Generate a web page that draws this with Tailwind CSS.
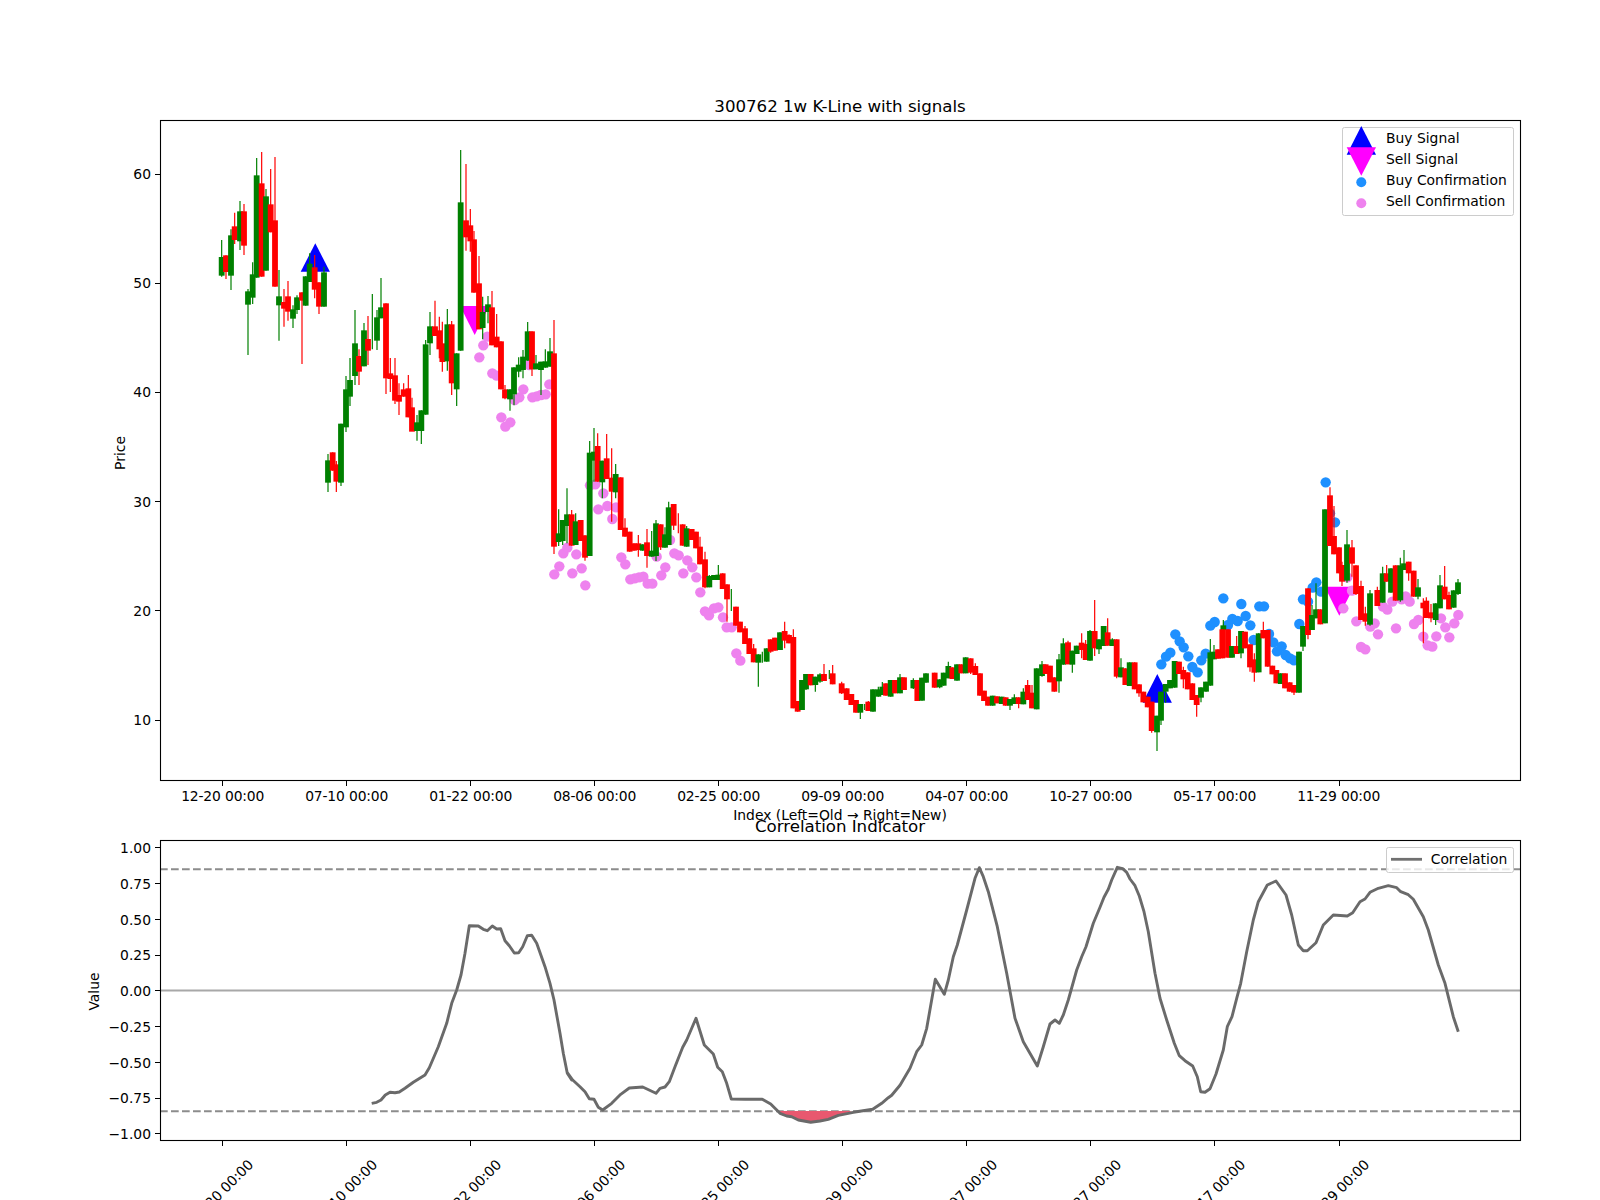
<!DOCTYPE html>
<html>
<head>
<meta charset="utf-8">
<script src="https://cdn.jsdelivr.net/npm/@tailwindcss/browser@4"></script>
</head>
<body class="bg-white">
<div class="w-[1600px] h-[1200px] overflow-hidden bg-white">
<svg id="c" width="1600" height="1200" viewBox="0 0 1600 1200" class="block font-['DejaVu_Sans'] text-[13.89px] fill-black">
  <text x="840" y="112" text-anchor="middle" class="text-[16.67px] tracking-[-0.03px]">300762 1w K-Line with signals</text>
  <g id="upper"></g>
  <rect x="160.5" y="120.5" width="1360" height="660" fill="none" stroke="#000" stroke-width="1.1"/>
  <g stroke="#000" stroke-width="1" shape-rendering="crispEdges">
    <path d="M155 174.5H160M155 283.5H160M155 392.5H160M155 501.5H160M155 610.5H160M155 720.5H160"/>
    <path d="M222.5 781v5M346.5 781v5M470.5 781v5M594.5 781v5M718.5 781v5M842.5 781v5M966.5 781v5M1090.5 781v5M1214.5 781v5M1339.5 781v5"/>
    <path d="M155 847.5H160M155 883.5H160M155 919.5H160M155 955.5H160M155 990.5H160M155 1026.5H160M155 1062.5H160M155 1098.5H160M155 1133.5H160"/>
    <path d="M222.5 1141v5M346.5 1141v5M470.5 1141v5M594.5 1141v5M718.5 1141v5M842.5 1141v5M966.5 1141v5M1090.5 1141v5M1214.5 1141v5M1339.5 1141v5"/>
  </g>
  <g text-anchor="end">
    <text x="151" y="179">60</text><text x="151" y="288.2">50</text><text x="151" y="397.4">40</text><text x="151" y="506.6">30</text><text x="151" y="615.8">20</text><text x="151" y="725">10</text>
    <text x="151" y="853">1.00</text><text x="151" y="888.5">0.75</text><text x="151" y="924.5">0.50</text><text x="151" y="960">0.25</text><text x="151" y="996">0.00</text><text x="151" y="1031.5">−0.25</text><text x="151" y="1067.5">−0.50</text><text x="151" y="1103">−0.75</text><text x="151" y="1139">−1.00</text>
  </g>
  <g text-anchor="middle">
    <g class="tracking-[-0.15px]">
    <text x="222.7" y="801">12-20 00:00</text><text x="346.7" y="801">07-10 00:00</text><text x="470.7" y="801">01-22 00:00</text><text x="594.7" y="801">08-06 00:00</text><text x="718.7" y="801">02-25 00:00</text><text x="842.7" y="801">09-09 00:00</text><text x="966.7" y="801">04-07 00:00</text><text x="1090.7" y="801">10-27 00:00</text><text x="1214.7" y="801">05-17 00:00</text><text x="1338.7" y="801">11-29 00:00</text>
    </g>
    <text x="840" y="820">Index (Left=Old → Right=New)</text>
    <text x="840" y="832" class="text-[16.67px] tracking-[-0.03px]">Correlation Indicator</text>
    <text transform="translate(124.5 453) rotate(-90)">Price</text>
    <text transform="translate(98.5 991.5) rotate(-90)">Value</text>
    <g class="tracking-[-0.15px]">
    <text transform="translate(224.7 1195) rotate(-45)">12-20 00:00</text>
    <text transform="translate(348.7 1195) rotate(-45)">07-10 00:00</text>
    <text transform="translate(472.7 1195) rotate(-45)">01-22 00:00</text>
    <text transform="translate(596.7 1195) rotate(-45)">08-06 00:00</text>
    <text transform="translate(720.7 1195) rotate(-45)">02-25 00:00</text>
    <text transform="translate(844.7 1195) rotate(-45)">09-09 00:00</text>
    <text transform="translate(968.7 1195) rotate(-45)">04-07 00:00</text>
    <text transform="translate(1092.7 1195) rotate(-45)">10-27 00:00</text>
    <text transform="translate(1216.7 1195) rotate(-45)">05-17 00:00</text>
    <text transform="translate(1340.7 1195) rotate(-45)">11-29 00:00</text>
    </g>
  </g>
  <!-- upper legend -->
  <rect x="1342.5" y="127.5" width="171" height="88" rx="2" fill="#fff" fill-opacity="0.8" stroke="#ccc"/>
  <path d="M1361.3 126L1376 154.7H1346.7Z" fill="#00f"/>
  <path d="M1346.7 147.3H1376L1361.3 175.7Z" fill="#f0f"/>
  <circle cx="1361.3" cy="182.3" r="5" fill="#1e90ff"/>
  <circle cx="1361.3" cy="203.3" r="5" fill="#ee82ee"/>
  <text x="1386" y="143">Buy Signal</text>
  <text x="1386" y="164">Sell Signal</text>
  <text x="1386" y="185">Buy Confirmation</text>
  <text x="1386" y="206">Sell Confirmation</text>
  <!-- lower plot -->
  <g id="lower"></g>
  <rect x="160.5" y="840.5" width="1360" height="300" fill="none" stroke="#000" stroke-width="1.1"/>
  <rect x="1386.5" y="847.5" width="127" height="25" rx="2" fill="#fff" fill-opacity="0.8" stroke="#ccc"/>
  <path d="M1391 859.3H1422" stroke="#707070" stroke-width="2.8"/>
  <text x="1430.7" y="864.3">Correlation</text>
</svg>
</div>
<script>
const NS='http://www.w3.org/2000/svg';
function el(parent,tag,attrs){const e=document.createElementNS(NS,tag);for(const k in attrs)e.setAttribute(k,attrs[k]);parent.appendChild(e);return e;}
const upper=document.getElementById('upper'),lower=document.getElementById('lower');
// marker triangles
[[315.3,243.3,271.7],[1157.3,674,702.7]].forEach(t=>el(upper,'path',{d:`M${t[0]} ${t[1]}L${t[0]+14.6} ${t[2]}H${t[0]-14.6}Z`,fill:'#00f'}));
[[474.7,306,335],[1339.3,586.7,615.7]].forEach(t=>el(upper,'path',{d:`M${t[0]-14.6} ${t[1]}H${t[0]+14.6}L${t[0]} ${t[2]}Z`,fill:'#f0f'}));
function dots(x0,y0,list,color){list.trim().split(/\s+/).forEach(p=>{const [a,b]=p.split(',').map(Number);el(upper,'circle',{cx:x0+a/3,cy:y0+b/3,r:5.2,fill:color});});}
dots(1030,550,`394,343 408,320 421,308 436,253 449,274 461,292 475,319 487,351 503,367 514,331 527,311 541,227 554,216 580,145 594,225 607,207 623,213 634,162 647,198 661,226 688,169 702,169 671,270 717,252 730,277 741,304 755,289 767,315 780,325 792,331 808,222 819,148 834,155 848,113 859,97 873,125`,'#1e90ff');
dots(1260,460,`197,67 210,160 225,187`,'#1e90ff');
dots(430,300,`148,172 160,136 172,110 187,220 200,227 214,352 241,367 226,380 280,268 268,292 254,300 307,292 320,289 333,285 347,283 358,253 298,195 373,823 388,799 427,820 400,760 412,743 439,763 455,805 466,856 480,556 496,553 520,580 505,628 532,618 558,622 547,657 574,772 586,793 601,838 614,835 627,832 640,830 653,851 667,851 680,770 706,802 694,826 720,720 733,760 746,766 772,781 787,802 799,832 760,820 811,877`,'#ee82ee');
dots(640,500,`195,334 207,346 222,325 235,322 249,352 260,382 275,382 289,460 301,482`,'#ee82ee');
dots(1260,460,`250,445 276,392 262,352 289,484 344,490 331,500 354,523 303,561 316,568 369,440 382,449 397,425 437,409 425,418 449,425 408,505 462,492 475,480 490,530 503,556 517,560 543,475 556,502 529,529 568,532 583,490 595,465`,'#ee82ee');
// candles: colour x bodyTop bodyBottom wickTop wickBottom, in crop coordinates (3x)
function candles(x0,y0,s){s.trim().split(/\s*;\s*/).filter(Boolean).forEach(r=>{const p=r.split(/\s+/),col=p[0]=='G'?'#008000':'#ff0000',[zx,bt,bb,wt,wb]=p.slice(1).map(Number),x=x0+zx/3;
 el(upper,'path',{d:`M${x} ${y0+wt/3}V${y0+wb/3}`,stroke:col,'stroke-width':1.2,fill:'none'});
 if(bb>bt)el(upper,'rect',{x:x-2.9,y:y0+bt/3,width:5.8,height:(bb-bt)/3,fill:col});});}
candles(150,110,`G 215 441 497 390 500;R 228 436 486 436 507;G 243 376 497 358 540;R 254 349 390 308 402;G 270 304 394 273 420;R 282 304 407 282 435;G 294 544 584 537 735;G 308 493 563 457 582;G 320 196 503 144 503;R 335 220 500 126 500;G 348 259 482 237 482;R 362 283 367 177 367;R 375 331 530 141 530;G 387 559 586 480 692;R 402 576 596 537 650;R 414 559 605 513 632;G 429 598 626 586 654;G 441 562 600 556 612;R 456 547 572 547 762;G 467 499 587 499 587;G 479 461 516 430 516;R 494 472 539 435 565;R 507 517 590 517 612;G 522 487 590 470 590`);
candles(315,300,`G 39 481 548 462 576;R 53 457 512 457 512;R 64 493 545 483 576;G 78 371 548 371 558;G 93 268 382 228 396;G 105 240 290 174 318;G 120 130 228 30 255;R 132 168 215 148 255;G 147 91 199 69 199;R 159 117 152 48 195;G 172 100 100 -18 148;G 186 52 122 30 150;G 198 22 55 -66 55;R 213 10 235 10 282;R 226 220 237 174 276;R 240 226 302 174 312;R 252 285 305 250 345;R 266 268 290 250 290;R 280 265 352 225 352;R 291 322 395 293 378;G 306 367 393 345 422;G 319 331 393 331 432;G 332 133 344 120 344;G 345 79 130 36 165;R 360 79 108 2 108;R 373 91 148 50 175;R 382 130 186 65 215;G 397 73 184 27 212;R 410 73 250 63 285;G 425 160 268 160 318`);
candles(150,110,`G 932 277 722 120 722;R 948 331 382 162 422;R 961 346 394 297 425;R 972 388 548 363 548;R 987 520 658 438 658`);
candles(430,300,`G 158 36 84 -10 118;G 174 13 36 -12 70;R 186 22 136 -27 136;R 200 110 142 42 142;R 213 124 268 124 268;R 225 268 295 255 298;G 240 268 298 268 332;G 252 202 283 202 316;G 266 194 215 172 232;G 279 170 210 150 235;G 293 94 182 66 182;R 306 94 208 94 228;G 318 190 208 165 208;G 333 185 210 185 285;G 346 184 203 148 203;G 360 154 200 114 200;R 372 160 740 60 762;G 386 700 726 628 738;G 398 660 723 660 735;G 411 643 678 565 730;R 425 643 737 630 737;G 437 664 735 640 735;R 452 660 723 660 723;R 465 706 773 706 782;G 479 458 768 423 768;G 492 455 482 384 545;R 503 438 545 400 545;G 517 482 547 482 595;R 530 475 537 402 537;R 545 533 575 445 665;G 557 522 577 492 595;R 572 532 690 532 690;R 585 683 710 655 710;R 599 695 755 695 755;R 612 730 752 730 752;R 625 730 750 705 770;G 638 733 752 733 752;R 651 727 768 687 803;G 665 752 770 693 770;G 678 670 768 660 783;R 692 673 742 673 750;G 705 703 743 682 743;G 716 622 735 605 735;R 731 612 677 612 690`);
candles(640,500,`R 115 60 60 40 100;R 128 73 137 73 137;G 140 85 140 78 140;R 155 87 120 87 120;R 168 95 145 95 145;R 180 140 193 110 193;R 195 178 262 155 265;G 208 228 262 225 262;G 222 225 240 225 240;G 235 224 240 195 240;R 248 220 267 220 267;R 261 253 298 253 365;G 274 300 300 267 333;R 288 320 377 320 377;R 300 365 397 365 397;R 315 385 432 378 432;R 328 415 462 415 462;R 341 445 487 432 487;G 355 463 488 463 560;G 367 470 470 455 488;G 380 445 485 445 485;R 392 418 455 418 458;R 405 413 452 413 452;G 420 397 450 397 450;R 434 393 422 365 445;R 447 405 430 403 430;R 460 411 625 388 625;R 473 603 635 603 635;G 486 540 630 540 630;G 498 522 568 522 570;R 512 522 556 522 556;G 526 530 555 530 575;G 540 523 545 520 548;R 552 522 543 492 543;G 568 525 525 510 537;R 578 520 553 495 553;R 605 550 580 545 582;R 620 565 600 565 600;R 634 582 615 582 615;R 648 600 638 600 638;G 661 612 638 612 657;G 674 620 620 612 630;R 685 605 633 603 633;G 699 568 635 568 635;G 715 568 590 560 590;G 727 560 585 546 585;R 738 550 587 550 587;G 752 540 590 540 590;R 765 540 580 540 580;G 780 532 580 522 580;R 792 532 570 532 570;G 820 540 565 535 567;R 832 540 603 540 603;G 846 533 602 533 602;G 858 520 548 520 548;R 884 518 563 518 563;G 899 538 562 538 565;G 911 518 557 518 557;G 925 498 535 485 535;R 937 502 537 502 537;G 951 493 542 493 542;R 964 493 520 493 520;G 977 472 520 472 520;R 992 475 518 475 522;R 1006 498 525 490 525;R 1020 520 587 520 587;R 1032 572 603 572 603;R 1044 590 617 590 617;G 1058 587 617 587 617;R 1071 589 610 589 610;G 1085 590 612 590 612;R 1097 592 617 592 617;G 1110 597 617 597 630;G 1123 592 612 583 612;R 1136 592 612 592 625;G 1150 575 613 565 613;R 1163 555 600 540 600`);
candles(1030,550,`R 6 428 475 405 475;G 20 355 478 355 478;G 36 343 378 333 380;R 47 343 372 343 372;R 60 347 397 347 397;R 73 382 425 382 425;G 87 328 394 312 428;G 100 280 344 265 344;R 114 277 343 272 343;G 127 302 344 302 368;G 140 287 312 287 312;R 155 278 300 250 325;R 167 282 330 270 330;G 180 243 332 240 332;R 194 243 295 150 318;G 207 268 298 268 312;G 221 228 288 228 288;R 233 247 287 205 287;G 247 268 288 265 288;R 260 268 380 268 385;G 273 352 382 325 382;R 286 355 405 355 405;G 299 337 408 337 408;R 314 337 418 337 418;R 327 403 430 403 440;R 340 425 457 425 457;R 353 440 472 440 472;R 365 455 543 455 548;G 381 497 547 497 603;G 393 425 512 425 525;G 407 402 425 402 458;G 420 390 415 390 415;G 434 333 413 333 413;R 447 335 372 335 372;R 460 360 388 350 415;R 473 367 418 367 418;R 487 400 450 400 450;R 500 435 465 435 500;G 513 412 443 412 457;G 528 395 425 395 425;G 541 307 407 267 407;G 552 305 328 285 328;R 564 298 326 298 326;G 580 226 240 210 240;R 577 238 325 238 325;R 594 238 323 238 323;G 606 288 323 288 323;R 620 288 312 258 312;G 633 243 310 243 325;R 645 245 295 245 295;R 660 283 352 283 365;R 673 328 368 310 395;G 686 250 367 250 367;R 700 240 265 215 265;R 713 240 350 240 350;R 727 347 373 347 373;R 739 360 400 360 400;G 752 370 402 370 402;R 765 370 415 370 415;R 779 397 425 397 425;R 792 405 428 405 435;G 807 305 428 305 428;G 819 228 290 228 303;R 834 115 255 115 268;G 846 195 240 165 240;G 858 178 205 100 205;R 871 178 223 178 223`);
candles(1260,460,`G 195 148 490 148 490;R 210 106 258 82 258;R 222 228 283 138 283;R 237 262 340 262 340;R 246 315 365 305 378;G 261 253 362 210 368;R 276 262 311 240 350;R 288 316 402 316 405;R 303 378 480 362 480;R 316 460 485 440 497;G 330 400 494 390 497;R 352 390 438 380 438;G 368 340 428 320 428;R 380 340 365 315 365;G 393 325 398 325 398;R 407 316 422 316 422;G 421 316 421 293 425;G 432 310 330 270 330;R 446 305 340 305 362;R 461 332 410 332 410;G 474 382 410 357 418;R 490 428 445 415 550;R 499 422 474 412 474;R 513 457 475 432 487;G 527 430 480 430 495;G 540 376 445 345 445;R 554 380 418 318 418;R 567 405 448 395 448;G 581 391 443 391 443;G 594 367 402 357 405`);
// lower plot
el(lower,'path',{d:'M160 990.5H1520',stroke:'#a8a8a8','stroke-width':2,fill:'none'});
el(lower,'path',{d:'M160 869.3H1520M160 1111.3H1520',stroke:'#8c8c8c','stroke-width':2.1,'stroke-dasharray':'7.7 3.3',fill:'none'});
function pts(x0,y0,s){return s.trim().split(/\s+/).map(p=>{const [a,b]=p.split(',').map(Number);return (x0+a/3).toFixed(1)+' '+(y0+b/3).toFixed(1);});}
el(lower,'path',{d:'M'+pts(560,820,`650,873 660,880 680,888 695,890 715,900 752,907 780,903 805,898 835,886 878,873`).join('L')+'Z',fill:'#e8586f'});
const curve=[...pts(80,770,`875,1000 890,997 903,990 916,975 930,967 945,968 958,966 975,955 1000,937 1035,915 1048,893 1075,830 1100,760 1115,700 1130,660 1143,615 1155,550 1168,467 1195,468 1210,478 1222,482 1237,468 1250,477 1262,476 1275,512 1288,527 1303,549 1316,548 1328,530 1342,497 1355,496 1370,520 1395,590 1410,640 1422,690 1440,790 1450,850 1462,910 1475,930`),
...pts(560,820,`22,758 38,780 60,800 75,815 88,836 102,838 115,862 128,870 155,850 182,823 208,804 248,801 288,820 300,805 315,801 328,785 345,740 368,682 380,660 408,595 433,675 460,702 473,742 487,755 500,790 514,837 555,838 607,838 632,852 660,880 680,888 695,890 715,900 752,907 780,903 805,898 835,886 880,877 938,868 965,850 985,833 995,826 1020,796 1050,745 1070,695 1085,675 1100,625 1126,478 1153,523 1165,480 1180,410 1192,375 1220,270 1245,175 1258,143 1270,170 1285,215 1312,320 1340,460 1365,595 1390,665 1432,738 1450,680 1470,612 1485,600 1498,610`),
...pts(1040,820,`70,585 85,540 110,450 125,410 138,380 160,310 180,262 192,232 205,208 215,180 232,142 248,146 260,157 270,177 285,197 298,228 312,275 325,335 345,460 360,535 380,600 403,670 418,707 435,722 458,738 472,770 482,815 495,817 510,806 528,762 550,690 562,620 576,590 590,535 602,490 620,395 640,300 655,245 682,195 708,183 738,225 755,285 775,375 790,392 802,392 828,368 850,315 880,285 922,288 938,278 960,245 975,237 990,217 1015,205 1045,197 1070,203 1082,215 1105,224 1120,238 1150,290 1165,330 1195,435 1215,490 1240,590 1255,635`)];
el(lower,'path',{d:'M'+curve.join('L'),stroke:'#6a6a6a','stroke-width':2.9,fill:'none','stroke-linejoin':'round'});
</script>
</body>
</html>
